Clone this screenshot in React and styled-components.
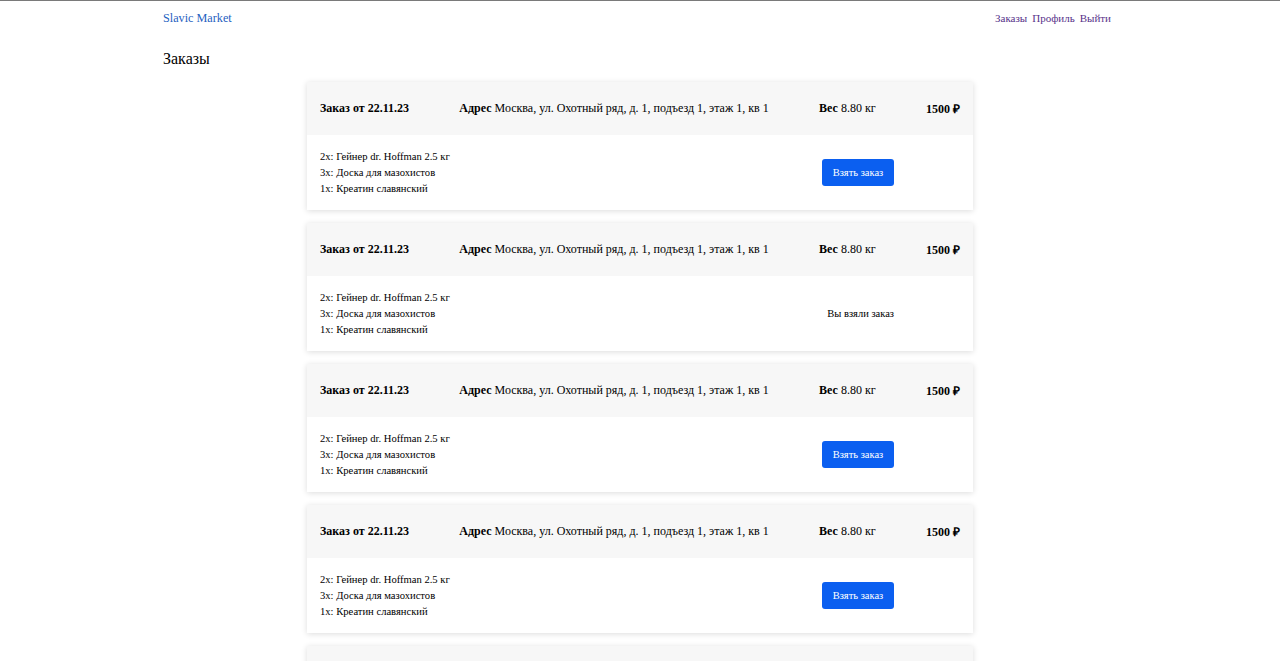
import styled, { createGlobalStyle } from "styled-components";

const GlobalStyle = createGlobalStyle`
    html, body {
        margin: 0;
        padding: 0;
        background: #FFFFFF;
        font-family: "Liberation Serif", "Times New Roman", serif;
        color: #000000;
    }
`;

const orders = [
    { id: 1, date: "22.11.23", taken: false },
    { id: 2, date: "22.11.23", taken: true },
    { id: 3, date: "22.11.23", taken: false },
    { id: 4, date: "22.11.23", taken: false },
    { id: 5, date: "22.11.23", taken: false },
];

const items = [
    "2x: Гейнер dr. Hoffman 2.5 кг",
    "3x: Доска для мазохистов",
    "1x: Креатин славянский",
];

const OrderCard = ({ order }) => (
    <Card>
        <CardHeader>
            <Bold>Заказ от {order.date}</Bold>
            <span>
                <Bold>Адрес</Bold> Москва, ул. Охотный ряд, д. 1, подъезд 1, этаж 1, кв 1
            </span>
            <span>
                <Bold>Вес</Bold> 8.80 кг
            </span>
            <Bold>1500 ₽</Bold>
        </CardHeader>
        <CardBody>
            <ItemList>
                {items.map((item) => (
                    <li key={item}>{item}</li>
                ))}
            </ItemList>
            {order.taken ? (
                <TakenText>Вы взяли заказ</TakenText>
            ) : (
                <TakeButton>Взять заказ</TakeButton>
            )}
        </CardBody>
    </Card>
);

const App = () => {
    return (
        <Page>
            <GlobalStyle />
            <Container>
                <Header>
                    <Logo href="#">Slavic Market</Logo>
                    <Nav>
                        <NavLink href="#">Заказы</NavLink>
                        <NavLink href="#">Профиль</NavLink>
                        <NavLink href="#">Выйти</NavLink>
                    </Nav>
                </Header>
                <Title>Заказы</Title>
            </Container>
            <OrderList>
                {orders.map((order) => (
                    <OrderCard key={order.id} order={order} />
                ))}
            </OrderList>
        </Page>
    );
};

export default App;

const Page = styled.div`
    border-top: 1px solid #7a7a7a;
    padding-bottom: 40px;
`;

const Container = styled.div`
    width: 948px;
    margin: 0 auto;
    padding-right: 6px;
`;

const Header = styled.header`
    height: 34px;
    display: flex;
    justify-content: space-between;
    align-items: center;
`;

const Logo = styled.a`
    font-size: 12.2px;
    color: #1f5fbf;
    text-decoration: none;
`;

const Nav = styled.nav`
    display: flex;
    gap: 5px;
`;

const NavLink = styled.a`
    font-size: 11px;
    color: #58328a;
    text-decoration: none;
`;

const Title = styled.h1`
    margin: 14px 0 0;
    font-size: 16px;
    font-weight: 400;
    line-height: 20px;
`;

const OrderList = styled.div`
    width: 666px;
    margin: 13px auto 0;
    display: flex;
    flex-direction: column;
    gap: 13px;
`;

const Card = styled.div`
    background: #FFFFFF;
    box-shadow: 0 1px 6px rgba(0, 0, 0, 0.14);
`;

const CardHeader = styled.div`
    background: #F7F7F7;
    height: 53px;
    padding: 0 13px;
    display: flex;
    justify-content: space-between;
    align-items: center;
    font-size: 12px;
`;

const Bold = styled.b`
    font-weight: 700;
`;

const CardBody = styled.div`
    height: 75px;
    padding: 0 79px 0 13px;
    display: flex;
    justify-content: space-between;
    align-items: center;
`;

const ItemList = styled.ul`
    margin: 0;
    padding: 0;
    list-style: none;
    font-size: 10.6px;
    line-height: 16px;
`;

const TakeButton = styled.button`
    width: 72px;
    height: 27px;
    border: none;
    border-radius: 3px;
    background: #0B5FF0;
    color: #FFFFFF;
    font-family: "Liberation Serif", "Times New Roman", serif;
    font-size: 10.5px;
    padding: 0;
    cursor: pointer;
`;

const TakenText = styled.span`
    font-size: 10.5px;
`;
